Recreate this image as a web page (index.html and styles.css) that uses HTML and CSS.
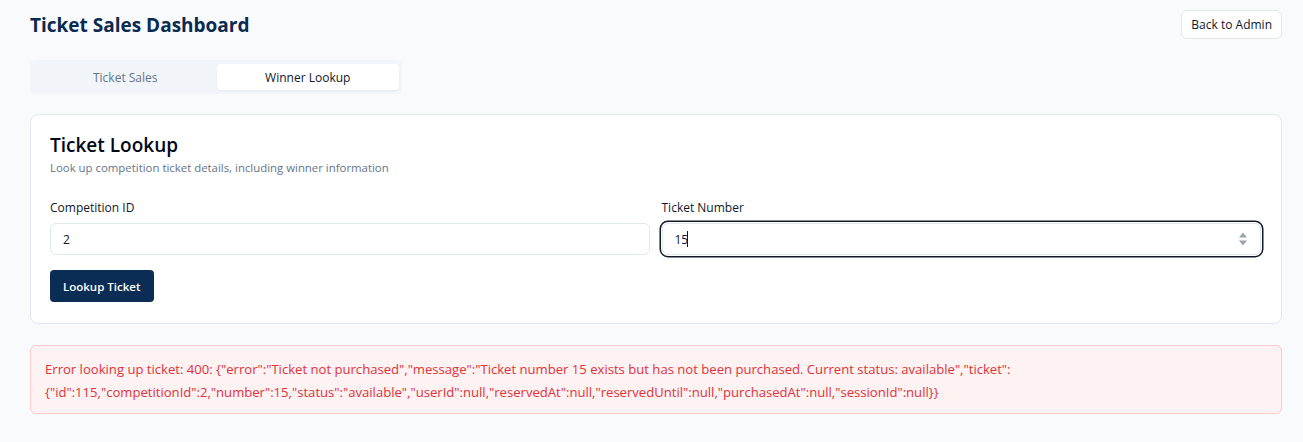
FILE: index.html
```html
<!DOCTYPE html>
<html lang="en">
<head>
<meta charset="utf-8">
<title>Ticket Sales Dashboard</title>
<link rel="stylesheet" href="styles.css">
</head>
<body>
<div class="page">
  <header class="topbar">
    <h1 class="title">Ticket Sales Dashboard</h1>
    <button class="btn-outline">Back to Admin</button>
  </header>
  <nav class="tabs">
    <button class="tab">Ticket Sales</button>
    <button class="tab active">Winner Lookup</button>
  </nav>
  <section class="card">
    <h2 class="card-title">Ticket Lookup</h2>
    <p class="card-sub">Look up competition ticket details, including winner information</p>
    <div class="fields">
      <label class="field">
        <span class="label">Competition ID</span>
        <input class="input" type="text" value="2">
      </label>
      <label class="field">
        <span class="label">Ticket Number</span>
        <span class="input-wrap">
          <input class="input focused" type="text" value="15">
          <span class="caret"></span>
          <svg class="spinner" width="10" height="16" viewBox="0 0 10 16" aria-hidden="true">
            <path d="M5 1.5 L9 6.5 H1 Z" fill="#9ca3af"/>
            <path d="M5 14.5 L9 9.5 H1 Z" fill="#9ca3af"/>
          </svg>
        </span>
      </label>
    </div>
    <button class="btn-primary">Lookup Ticket</button>
  </section>
  <div class="error">Error looking up ticket: 400: {"error":"Ticket not purchased","message":"Ticket number 15 exists but has not been purchased. Current status: available","ticket":{"id":115,"competitionId":2,"number":15,"status":"available","userId":null,"reservedAt":null,"reservedUntil":null,"purchasedAt":null,"sessionId":null}}</div>
</div>
</body>
</html>
```
FILE: styles.css
```css
* { box-sizing: border-box; }
html, body { margin: 0; padding: 0; }
body {
  background: #f8fafc;
  font-family: "Open Sans", "Noto Sans", sans-serif;
  color: #0f172a;
}
.page {
  padding: 10px 21px 20px 30px;
}
.topbar {
  display: flex;
  justify-content: space-between;
  align-items: flex-start;
}
.title {
  margin: 1px 0 0;
  font-size: 19px;
  line-height: 28px;
  font-weight: 700;
  color: #0b2a4f;
}
.btn-outline {
  font-family: inherit;
  font-size: 12px;
  height: 29px;
  padding: 0 9px;
  background: #fff;
  border: 1px solid #e2e8f0;
  border-radius: 6px;
  color: #0f172a;
}
.tabs {
  margin-top: 21px;
  display: inline-flex;
  background: #f1f5f9;
  border-radius: 6px;
  padding: 4px 3px 4px 4px;
  width: 372px;
}
.tab {
  flex: 1;
  font-family: inherit;
  font-size: 12px;
  height: 26px;
  border: 0;
  background: transparent;
  border-radius: 4px;
  color: #64748b;
}
.tab.active {
  background: #fff;
  color: #0f172a;
  box-shadow: 0 1px 2px rgba(0,0,0,0.05);
}
.card {
  margin-top: 20px;
  background: #fff;
  border: 1px solid #e2e8f0;
  border-radius: 8px;
  padding: 16px 20px 21px 19px;
}
.card-title {
  margin: 0;
  font-size: 19px;
  line-height: 28px;
  font-weight: 600;
  color: #020817;
}
.card-sub {
  margin: 0;
  font-size: 11.4px;
  line-height: 18px;
  color: #64748b;
}
.fields {
  margin-top: 23px;
  display: grid;
  grid-template-columns: 1fr 1fr;
  gap: 12px;
}
.field {
  display: flex;
  flex-direction: column;
  gap: 7px;
}
.label {
  font-size: 12px;
  line-height: 16px;
  font-weight: 500;
  color: #0f172a;
}
.input-wrap {
  position: relative;
  display: flex;
}
.input {
  width: 100%;
  height: 32px;
  font-family: inherit;
  font-size: 12px;
  padding: 0 12px;
  border: 1px solid #e2e8f0;
  border-radius: 6px;
  background: #fff;
  color: #0f172a;
  outline: none;
}
.input.focused {
  box-shadow: 0 0 0 1px #fff, 0 0 0 2.5px #111827;
}
.caret {
  position: absolute;
  left: 25px;
  top: 8px;
  width: 1px;
  height: 16px;
  background: #111827;
}
.spinner {
  position: absolute;
  right: 13px;
  top: 8px;
}
.btn-primary {
  margin-top: 15px;
  font-family: inherit;
  font-size: 11.5px;
  font-weight: 600;
  height: 32px;
  padding: 0 13px;
  background: #0b2d55;
  color: #fff;
  border: 0;
  border-radius: 4px;
}
.error {
  margin-top: 21px;
  background: #fef2f2;
  border: 1px solid #fecaca;
  border-radius: 6px;
  padding: 12px 14px 10px 14px;
  font-size: 13.1px;
  line-height: 22.5px;
  color: #e0313a;
}
```
